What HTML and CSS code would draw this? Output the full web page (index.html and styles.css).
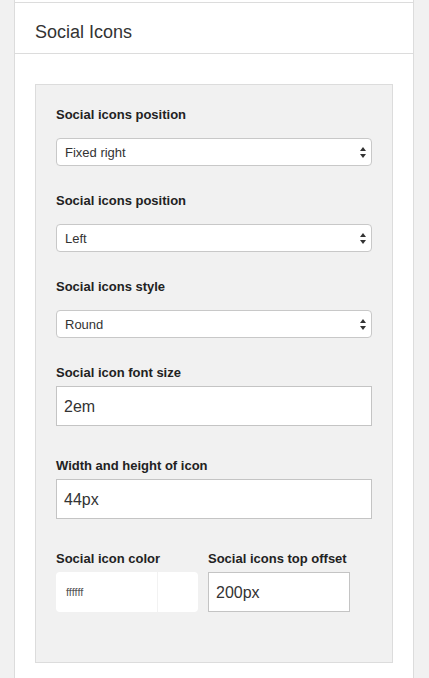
FILE: index.html
```html
<!DOCTYPE html>
<html>
<head>
<meta charset="utf-8">
<link rel="stylesheet" href="styles.css">
</head>
<body>
<div class="page">
  <div class="card">
    <div class="card-top"></div>
    <div class="card-header">Social Icons</div>
    <div class="card-body">
      <div class="panel">
        <div class="field field-select">
          <label class="label">Social icons position</label>
          <div class="select-wrap">
            <div class="select">Fixed right</div>
            <svg class="arrows" width="6" height="11" viewBox="0 0 6 11"><path d="M0 4 L3 0 L6 4 Z M0 7 L3 11 L6 7 Z" fill="#333"/></svg>
          </div>
        </div>
        <div class="field field-select">
          <label class="label">Social icons position</label>
          <div class="select-wrap">
            <div class="select">Left</div>
            <svg class="arrows" width="6" height="11" viewBox="0 0 6 11"><path d="M0 4 L3 0 L6 4 Z M0 7 L3 11 L6 7 Z" fill="#333"/></svg>
          </div>
        </div>
        <div class="field field-select">
          <label class="label">Social icons style</label>
          <div class="select-wrap">
            <div class="select">Round</div>
            <svg class="arrows" width="6" height="11" viewBox="0 0 6 11"><path d="M0 4 L3 0 L6 4 Z M0 7 L3 11 L6 7 Z" fill="#333"/></svg>
          </div>
        </div>
        <div class="field field-input">
          <label class="label">Social icon font size</label>
          <div class="input">2em</div>
        </div>
        <div class="field field-input">
          <label class="label">Width and height of icon</label>
          <div class="input">44px</div>
        </div>
        <div class="row">
          <div class="col">
            <label class="label">Social icon color</label>
            <div class="color">
              <span class="color-text">ffffff</span>
              <span class="color-swatch"></span>
            </div>
          </div>
          <div class="col">
            <label class="label">Social icons top offset</label>
            <div class="input">200px</div>
          </div>
        </div>
      </div>
    </div>
  </div>
</div>
</body>
</html>
```
FILE: styles.css
```css
html, body {
  margin: 0;
  padding: 0;
  background: #f1f1f1;
  font-family: "Liberation Sans", Arial, sans-serif;
  color: #333;
}

.page {
  padding-left: 14px;
  width: 400px;
}

.card {
  background: #fff;
  border-left: 1px solid #dcdcdc;
  border-right: 1px solid #dcdcdc;
  padding-bottom: 20px;
}

.card-top {
  height: 2px;
  border-bottom: 1px solid #dcdcdc;
}

.card-header {
  padding: 19px 20px 11px 20px;
  font-size: 18px;
  line-height: 20px;
  color: #333;
  border-bottom: 1px solid #dcdcdc;
}

.card-body {
  padding: 30px 20px 0 20px;
}

.panel {
  background: #f1f1f1;
  border: 1px solid #dcdcdc;
  padding: 20px 20px 50px 20px;
  display: flex;
  flex-direction: column;
}

.label {
  display: block;
  font-size: 13px;
  line-height: 17px;
  padding-top: 1px;
  font-weight: bold;
  color: #222;
}

.field-select {
  margin-bottom: 25px;
}

.field-select .label {
  margin-bottom: 15px;
}

.select-wrap {
  position: relative;
}

.select {
  height: 26px;
  line-height: 27px;
  border: 1px solid #c8c8c8;
  border-radius: 4px;
  background: #fff;
  padding-left: 8px;
  font-size: 13px;
  color: #333;
}

.arrows {
  position: absolute;
  right: 6px;
  top: 9px;
}

.field-input {
  margin-bottom: 30px;
}

.field-input .label,
.col .label {
  margin-bottom: 5px;
}

.input {
  height: 38px;
  line-height: 39px;
  border: 1px solid #c4c4c4;
  background: #fff;
  padding-left: 7px;
  font-size: 16px;
  color: #333;
}

.row {
  display: grid;
  grid-template-columns: 142px 142px;
  column-gap: 10px;
}

.color {
  height: 40px;
  display: flex;
  background: #fff;
  border-radius: 4px;
}

.color-text {
  width: 91px;
  padding-left: 10px;
  line-height: 40px;
  font-size: 11px;
  color: #555;
  border-right: 1px solid #f2f2f2;
}

.color-swatch {
  flex: 1;
}
```
